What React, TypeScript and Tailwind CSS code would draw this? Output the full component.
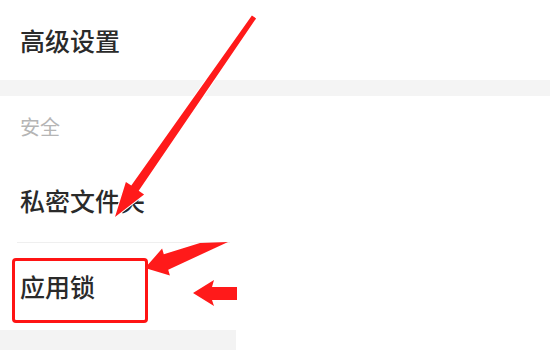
export default function App() {
  return (
    <div
      className="relative w-[550px] h-[350px] overflow-hidden bg-white text-[#2a2a2a]"
      style={{ fontFamily: '"Noto Sans CJK SC", "Noto Sans", sans-serif' }}
    >
      <div className="h-[80px] flex items-center pl-5 text-[25px] leading-none font-medium">高级设置</div>
      <div className="h-4 bg-[#f4f4f4]" />

      <div className="h-[62px] flex items-center pl-5 text-[20px] leading-none text-[#b5b5b5]">安全</div>
      <div className="h-[84px] flex items-center pl-5 text-[25px] leading-none font-medium">私密文件夹</div>
      <div className="w-[236px] pl-[17px] pr-[6px]">
        <div className="h-px bg-[#efefef]" />
      </div>
      <div className="w-[236px] h-[87px] flex items-center pl-5 text-[25px] leading-none font-medium">应用锁</div>
      <div className="w-[236px] h-5 bg-[#f3f3f3]" />

      {/* annotation highlight box */}
      <div className="absolute left-[12px] top-[258px] w-[136px] h-[65px] border-[3px] border-[#ff1414] rounded-[4px]" />

      {/* annotation arrows */}
      <svg className="absolute inset-0" width="550" height="350" viewBox="0 0 550 350">
        <polygon
          points="115,217 144.1,194.5 138.7,190.8 256.1,18.4 251.9,15.6 131.3,185.6 125.9,181.9"
          fill="#ff1a1a"
          stroke="#ffffff"
          strokeWidth="2"
          paintOrder="stroke"
        />
        <polygon
          points="145,268 162.1,248.6 163.8,254.3 200,243 228,242 168.2,269.7 169.9,275.4"
          fill="#ff1a1a"
        />
        <polygon points="193,293 214,280 212,287 237,287 237,300 212,300 214,306" fill="#ff1a1a" />
      </svg>
    </div>
  );
}
